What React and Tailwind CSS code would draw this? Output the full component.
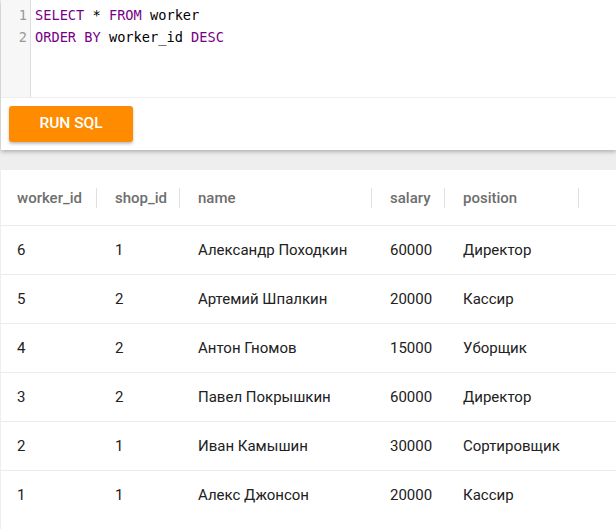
import React from "react";

const rows = [
  { worker_id: 6, shop_id: 1, name: "Александр Походкин", salary: 60000, position: "Директор" },
  { worker_id: 5, shop_id: 2, name: "Артемий Шпалкин", salary: 20000, position: "Кассир" },
  { worker_id: 4, shop_id: 2, name: "Антон Гномов", salary: 15000, position: "Уборщик" },
  { worker_id: 3, shop_id: 2, name: "Павел Покрышкин", salary: 60000, position: "Директор" },
  { worker_id: 2, shop_id: 1, name: "Иван Камышин", salary: 30000, position: "Сортировщик" },
  { worker_id: 1, shop_id: 1, name: "Алекс Джонсон", salary: 20000, position: "Кассир" },
];

const columns = [
  { key: "worker_id", width: "w-[98px]" },
  { key: "shop_id", width: "w-[83px]" },
  { key: "name", width: "w-[192px]" },
  { key: "salary", width: "w-[73px]" },
  { key: "position", width: "w-[134px]" },
];

const kw = "text-[#770088]";

export default function App() {
  return (
    <div className="min-h-[529px] bg-[#eeeeee] pl-px font-['Roboto',sans-serif] overflow-hidden">
      {/* editor card */}
      <div className="bg-white h-[150px] shadow-[0_2px_4px_rgba(0,0,0,0.25)] flex flex-col">
        <div className="flex h-[98px] border-b border-[#eeeeee]">
          <div className="w-[30px] bg-[#f7f7f7] border-r border-[#dddddd] pt-[4px] pr-[3px] text-right font-['DejaVu_Sans_Mono',monospace] text-[13.65px] leading-[22px] text-[#999999]">
            <div>1</div>
            <div>2</div>
          </div>
          <div className="pl-[4px] pt-[4px] font-['DejaVu_Sans_Mono',monospace] text-[13.65px] leading-[22px] text-black whitespace-pre">
            <div>
              <span className={kw}>SELECT</span> * <span className={kw}>FROM</span> worker
            </div>
            <div>
              <span className={kw}>ORDER</span> <span className={kw}>BY</span> worker_id <span className={kw}>DESC</span>
            </div>
          </div>
        </div>
        <div className="pl-[8px] pt-[8px]">
          <button className="w-[124px] h-[36px] rounded-[3px] bg-[#ff8c00] text-white text-[15.5px] font-medium shadow-[0_2px_3px_rgba(0,0,0,0.25)]">
            RUN SQL
          </button>
        </div>
      </div>

      {/* result table */}
      <div className="mt-[20px] bg-white min-h-[359px] text-[15px]">
        <div className="flex h-[56px] border-b border-[#ebebeb]">
          {columns.map((c) => (
            <div key={c.key} className={`${c.width} shrink-0 flex items-center justify-between pl-4 pr-[2px]`}>
              <span className="text-[#6e6e6e] font-medium pt-[2px]">{c.key}</span>
              <span className="w-px h-[20px] bg-[#e0e0e0]" />
            </div>
          ))}
        </div>
        {rows.map((r, i) => (
          <div
            key={r.worker_id}
            className={`flex h-[49px] ${i < rows.length - 1 ? "border-b border-[#ebebeb]" : ""}`}
          >
            {columns.map((c) => (
              <div key={c.key} className={`${c.width} shrink-0 flex items-center pl-4 text-[#212121] whitespace-nowrap`}>
                {r[c.key]}
              </div>
            ))}
          </div>
        ))}
      </div>
    </div>
  );
}
